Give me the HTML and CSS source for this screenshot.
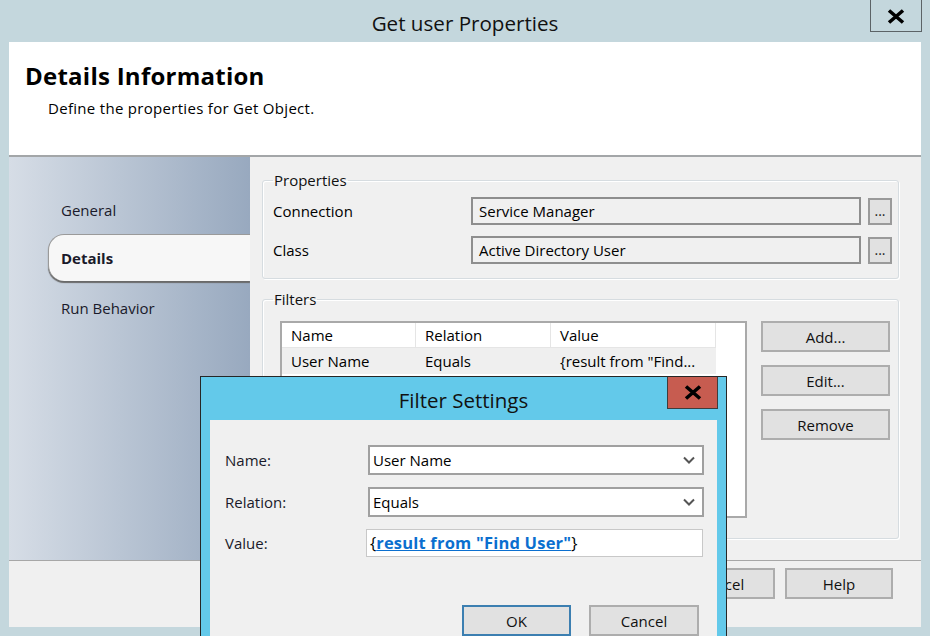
FILE: index.html
```html
<!DOCTYPE html>
<html>
<head>
<meta charset="utf-8">
<title>Get user Properties</title>
<link rel="stylesheet" href="styles.css">
</head>
<body>
<div class="screen">
  <div class="titlebar">
    <div></div>
    <div class="title">Get user Properties</div>
    <div class="closebox">
      <svg width="18" height="15" viewBox="0 0 18 15"><path d="M2 1.5 L16 13.5 M16 1.5 L2 13.5" stroke="#000" stroke-width="3.6" stroke-linecap="butt"/></svg>
    </div>
  </div>

  <div class="window">
    <div class="header">
      <h1>Details Information</h1>
      <p>Define the properties for Get Object.</p>
    </div>

    <div class="body">
      <nav class="sidebar">
        <div class="tab">General</div>
        <div class="tab active">Details</div>
        <div class="tab">Run Behavior</div>
      </nav>

      <main class="content">
        <fieldset class="group props">
          <legend>Properties</legend>
          <div class="prop-row">
            <span class="label">Connection</span>
            <div class="field">Service Manager</div>
            <button class="dots">...</button>
          </div>
          <div class="prop-row">
            <span class="label">Class</span>
            <div class="field">Active Directory User</div>
            <button class="dots">...</button>
          </div>
        </fieldset>

        <fieldset class="group filters">
          <legend>Filters</legend>
          <div class="filters-inner">
            <div class="list">
              <div class="list-head">
                <span>Name</span><span>Relation</span><span>Value</span>
              </div>
              <div class="list-row">
                <span>User Name</span><span>Equals</span><span>{result from "Find...</span>
              </div>
            </div>
            <div class="side-buttons">
              <button class="btn side">Add...</button>
              <button class="btn side">Edit...</button>
              <button class="btn side">Remove</button>
            </div>
          </div>
        </fieldset>
      </main>
    </div>

    <div class="footer">
      <button class="btn foot">OK</button>
      <button class="btn foot">Cancel</button>
      <button class="btn foot">Help</button>
    </div>
  </div>

  <div class="dialog">
    <div class="dlg-title">
      <div></div>
      <div class="dlg-caption">Filter Settings</div>
      <div class="dlg-close">
        <svg width="18" height="15" viewBox="0 0 18 15"><path d="M2 1.5 L16 13.5 M16 1.5 L2 13.5" stroke="#000" stroke-width="3.6"/></svg>
      </div>
    </div>
    <div class="dlg-body">
      <div class="dlg-grid">
        <span class="dlg-label">Name:</span>
        <div class="combo"><span>User Name</span>
          <svg width="12" height="8" viewBox="0 0 12 8"><path d="M1 1.5 L6 6.5 L11 1.5" fill="none" stroke="#555" stroke-width="2"/></svg>
        </div>
        <span class="dlg-label">Relation:</span>
        <div class="combo"><span>Equals</span>
          <svg width="12" height="8" viewBox="0 0 12 8"><path d="M1 1.5 L6 6.5 L11 1.5" fill="none" stroke="#555" stroke-width="2"/></svg>
        </div>
        <span class="dlg-label">Value:</span>
        <div class="valuebox">{<a class="link">result from "Find User"</a>}</div>
      </div>
      <div class="dlg-buttons">
        <button class="btn dlg default">OK</button>
        <button class="btn dlg">Cancel</button>
      </div>
    </div>
  </div>
</div>
</body>
</html>
```

FILE: styles.css
```css
* { box-sizing: border-box; }

html, body {
  margin: 0;
  padding: 0;
}

body {
  width: 930px;
  height: 636px;
  overflow: hidden;
  background: #c4d7dd;
  font-family: "Open Sans", "Noto Sans", sans-serif;
  font-size: 15px;
  color: #000;
}

.screen {
  position: relative;
  width: 930px;
  height: 636px;
}

/* ---------- main title bar ---------- */
.titlebar {
  height: 42px;
  display: grid;
  grid-template-columns: 1fr auto 1fr;
  align-items: start;
}

.title {
  font-size: 20.6px;
  line-height: 26px;
  padding-top: 10px;
  color: #111;
}

.closebox {
  justify-self: end;
  margin-right: 8px;
  width: 52px;
  height: 32px;
  border: 1px solid #5c6366;
  border-top: none;
  display: flex;
  align-items: center;
  justify-content: center;
  padding-top: 1px;
}

/* ---------- window ---------- */
.window {
  margin: 0 9px;
  height: 585px;
  display: flex;
  flex-direction: column;
}

.header {
  height: 115px;
  background: #fff;
  border-bottom: 2px solid #a3a6a8;
  padding: 20px 0 0 16px;
}

.header h1 {
  margin: 0;
  font-size: 24px;
  line-height: 28px;
  font-weight: 700;
  letter-spacing: 0.25px;
}

.header p {
  margin: 8px 0 0 23px;
  font-size: 15px;
  line-height: 20px;
  letter-spacing: 0.3px;
}

.body {
  height: 403px;
  display: flex;
}

/* ---------- sidebar ---------- */
.sidebar {
  width: 241px;
  background: linear-gradient(to right, #d6dde6, #98a9bf);
  padding-top: 28px;
}

.tab {
  height: 49px;
  margin-left: 39px;
  padding-left: 13px;
  display: flex;
  align-items: center;
  color: #1a1a2a;
}

.tab.active {
  background: #f7f7f7;
  border: 1px solid #9a9a9a;
  border-right: none;
  border-bottom: none;
  border-radius: 16px 0 0 16px;
  box-shadow: 0 2px 1px #6a6a6a;
  font-weight: 700;
  height: 47px;
  margin-bottom: 2px;
  padding-left: 12px;
}

/* ---------- content ---------- */
.content {
  flex: 1;
  background: #f0f0f0;
  padding: 13px 22px 0 12px;
}

.group {
  margin: 0;
  border: 1px solid #d6dce0;
  border-radius: 3px;
  box-shadow: inset 1px 1px 0 #fff, 1px 1px 0 #fff;
}

.group legend {
  padding: 0 1px;
  font-size: 15px;
  line-height: 20px;
  color: #111;
}

.props {
  padding: 7px 6px 14px 10px;
}

.prop-row {
  display: grid;
  grid-template-columns: 191px 1fr 24px;
  column-gap: 7px;
  align-items: center;
}

.prop-row + .prop-row {
  margin-top: 11px;
}

.field {
  height: 28px;
  border: 2px solid #8e8e8e;
  background: #f0f0f0;
  padding-left: 6px;
  line-height: 24px;
}

.dots {
  height: 27px;
  width: 24px;
  padding: 0;
  border: 2px solid #9a9a9a;
  background: #e1e1e1;
  font-family: inherit;
  font-size: 14px;
  line-height: 10px;
  display: flex;
  align-items: flex-end;
  justify-content: center;
  padding-bottom: 7px;
  color: #222;
}

.filters {
  margin-top: 10px;
  padding: 12px 8px 20px 10px;
}

.filters-inner {
  display: flex;
  gap: 14px;
  margin-left: 7px;
}

.list {
  width: 467px;
  height: 197px;
  border: 2px solid #a9a9a9;
  background: #fff;
}

.list-head,
.list-row {
  display: grid;
  grid-template-columns: 134px 135px 165px;
  width: 434px;
}

.list-head {
  height: 24px;
}

.list-head span {
  border-right: 1px solid #e5e5e5;
  border-bottom: 1px solid #e5e5e5;
  padding: 1px 0 0 9px;
  line-height: 23px;
}

.list-row {
  height: 27px;
  background: #efefef;
}

.list-row span {
  padding: 2px 0 0 9px;
  line-height: 25px;
  white-space: nowrap;
}

.side-buttons {
  display: flex;
  flex-direction: column;
  gap: 13px;
}

.btn {
  font-family: inherit;
  font-size: 15px;
  color: #111;
  background: #e1e1e1;
  border: 2px solid #adadad;
  padding: 0;
  text-align: center;
}

.btn.side {
  width: 129px;
  height: 31px;
}

/* ---------- footer ---------- */
.footer {
  height: 67px;
  border-top: 1px solid #a7a7a7;
  background: #f0f0f0;
  display: flex;
  justify-content: flex-end;
  align-items: flex-start;
  gap: 10px;
  padding: 7px 28px 0 0;
}

.btn.foot {
  width: 108px;
  height: 31px;
}

/* ---------- overlaid dialog ---------- */
.dialog {
  position: absolute;
  left: 200px;
  top: 376px;
  width: 527px;
  height: 270px;
  background: #63c9ea;
  border: 1px solid #262626;
  border-bottom: none;
  padding: 0 9px;
}

.dlg-title {
  height: 43px;
  display: grid;
  grid-template-columns: 1fr auto 1fr;
  align-items: start;
}

.dlg-caption {
  font-size: 20.5px;
  line-height: 26px;
  padding-top: 10px;
  color: #111;
}

.dlg-close {
  justify-self: end;
  margin-right: -1px;
  width: 51px;
  height: 32px;
  background: #c75c50;
  border: 1px solid #3d3d3d;
  border-top: none;
  display: flex;
  align-items: center;
  justify-content: center;
}

.dlg-body {
  background: #f0f0f0;
  height: 227px;
  padding: 25px 13px 0 15px;
}

.dlg-grid {
  display: grid;
  grid-template-columns: 143px 1fr;
  row-gap: 12px;
  align-items: center;
}

.dlg-label {
  color: #1a1a2a;
}

.combo {
  height: 30px;
  background: #fff;
  border: 2px solid #a0a0a0;
  display: flex;
  align-items: center;
  justify-content: space-between;
  padding: 0 7px 0 3px;
}

.valuebox {
  height: 28px;
  margin-left: -2px;
  margin-right: 1px;
  background: #fff;
  border: 1px solid #c8c8c8;
  padding-left: 3px;
  font-size: 16.5px;
  line-height: 26px;
}

.link {
  color: #0b6fcf;
  font-weight: 700;
  text-decoration: underline;
  letter-spacing: 0.2px;
}

.dlg-buttons {
  display: flex;
  justify-content: flex-end;
  gap: 18px;
  margin-top: 48px;
  padding-right: 5px;
}

.btn.dlg {
  width: 110px;
  height: 31px;
}

.btn.dlg.default {
  width: 109px;
  border-color: #3c7fb1;
}
```
